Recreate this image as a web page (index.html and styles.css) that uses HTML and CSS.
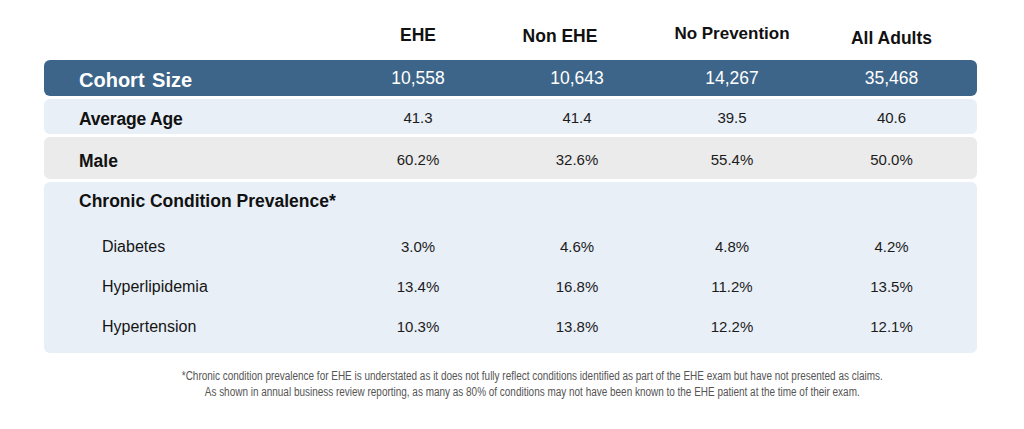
FILE: index.html
```html
<!DOCTYPE html>
<html lang="en">
<head>
<meta charset="utf-8">
<title>Cohort Comparison</title>
<link rel="stylesheet" href="styles.css">
</head>
<body>
<div class="page">
  <div class="grid head">
    <div></div>
    <div class="hc h-ehe">EHE</div>
    <div class="hc h-non">Non EHE</div>
    <div class="hc h-nop">No Prevention</div>
    <div class="hc h-all">All Adults</div>
  </div>

  <div class="grid row cohort">
    <div class="label">Cohort Size</div>
    <div class="val">10,558</div>
    <div class="val">10,643</div>
    <div class="val">14,267</div>
    <div class="val">35,468</div>
  </div>

  <div class="grid row age">
    <div class="label">Average Age</div>
    <div class="val">41.3</div>
    <div class="val">41.4</div>
    <div class="val">39.5</div>
    <div class="val">40.6</div>
  </div>

  <div class="grid row male">
    <div class="label">Male</div>
    <div class="val">60.2%</div>
    <div class="val">32.6%</div>
    <div class="val">55.4%</div>
    <div class="val">50.0%</div>
  </div>

  <div class="chronic">
    <div class="chronic-title">Chronic Condition Prevalence*</div>
    <div class="grid sub">
      <div class="sublabel">Diabetes</div>
      <div class="val">3.0%</div>
      <div class="val">4.6%</div>
      <div class="val">4.8%</div>
      <div class="val">4.2%</div>
    </div>
    <div class="grid sub">
      <div class="sublabel">Hyperlipidemia</div>
      <div class="val">13.4%</div>
      <div class="val">16.8%</div>
      <div class="val">11.2%</div>
      <div class="val">13.5%</div>
    </div>
    <div class="grid sub">
      <div class="sublabel">Hypertension</div>
      <div class="val">10.3%</div>
      <div class="val">13.8%</div>
      <div class="val">12.2%</div>
      <div class="val">12.1%</div>
    </div>
  </div>

  <div class="note"><p class="note-text">*Chronic condition prevalence for EHE is understated as it does not fully reflect conditions identified as part of the EHE exam but have not presented as claims.<br>As shown in annual business review reporting, as many as 80% of conditions may not have been known to the EHE patient at the time of their exam.</p></div>
</div>
</body>
</html>
```

FILE: styles.css
```css
html, body {
  margin: 0;
  padding: 0;
  background: #ffffff;
}

body {
  font-family: "Liberation Sans", Arial, sans-serif;
  color: #151515;
}

.page {
  width: 1024px;
  height: 429px;
  overflow: hidden;
}

.grid {
  display: grid;
  grid-template-columns: 296px 156px 162px 148px 171px;
  margin-left: 44px;
  width: 933px;
}

/* header */
.head {
  height: 60px;
  align-items: start;
}

.hc {
  font-weight: bold;
  font-size: 17.5px;
  line-height: 20px;
  text-align: center;
  color: #111;
}

.h-ehe { padding-top: 25px; }
.h-non { padding-top: 26px; padding-right: 34px; }
.h-nop { padding-top: 24px; font-size: 17px; }
.h-all { padding-top: 28px; }

/* rows */
.row {
  align-items: center;
  border-radius: 6px;
  box-sizing: border-box;
}

.label {
  padding-left: 35px;
  font-weight: bold;
  font-size: 17.5px;
  line-height: 20px;
  color: #111;
}

.val {
  text-align: center;
  font-size: 15px;
  line-height: 20px;
  color: #1c1c1c;
}

.cohort {
  height: 36px;
  background: #3d6589;
  margin-bottom: 3px;
}

.cohort .label {
  color: #ffffff;
  font-size: 20px;
  padding-top: 4px;
  word-spacing: 2px;
}

.cohort .val {
  color: #ffffff;
  font-size: 17.5px;
}

.age {
  height: 35px;
  background: #e8eff7;
  margin-bottom: 3px;
  padding-top: 2px;
}

.age .label {
  padding-top: 2px;
  letter-spacing: -0.2px;
}

.male {
  height: 42px;
  background: #ebebeb;
  margin-bottom: 3px;
  padding-top: 4px;
}

.male .label {
  padding-top: 2px;
}

/* chronic block */
.chronic {
  margin-left: 44px;
  width: 933px;
  height: 171px;
  box-sizing: border-box;
  background: #e8eff7;
  border-radius: 6px;
  padding-top: 9px;
}

.chronic-title {
  padding-left: 35px;
  font-weight: bold;
  font-size: 17.5px;
  line-height: 20px;
  color: #111;
  margin-bottom: 16px;
}

.chronic .grid {
  margin-left: 0;
}

.sub {
  height: 40px;
  align-items: center;
}

.sublabel {
  padding-left: 58px;
  font-size: 16px;
  line-height: 20px;
  color: #151515;
}

/* footnote */
.note {
  margin: 15px 0 0 44px;
  width: 976px;
  text-align: center;
}

.note-text {
  display: inline-block;
  margin: 0;
  white-space: nowrap;
  font-family: "Liberation Sans", Arial, sans-serif;
  font-size: 12px;
  line-height: 16px;
  color: #555555;
  transform: scaleX(0.83);
  transform-origin: center top;
}
```
